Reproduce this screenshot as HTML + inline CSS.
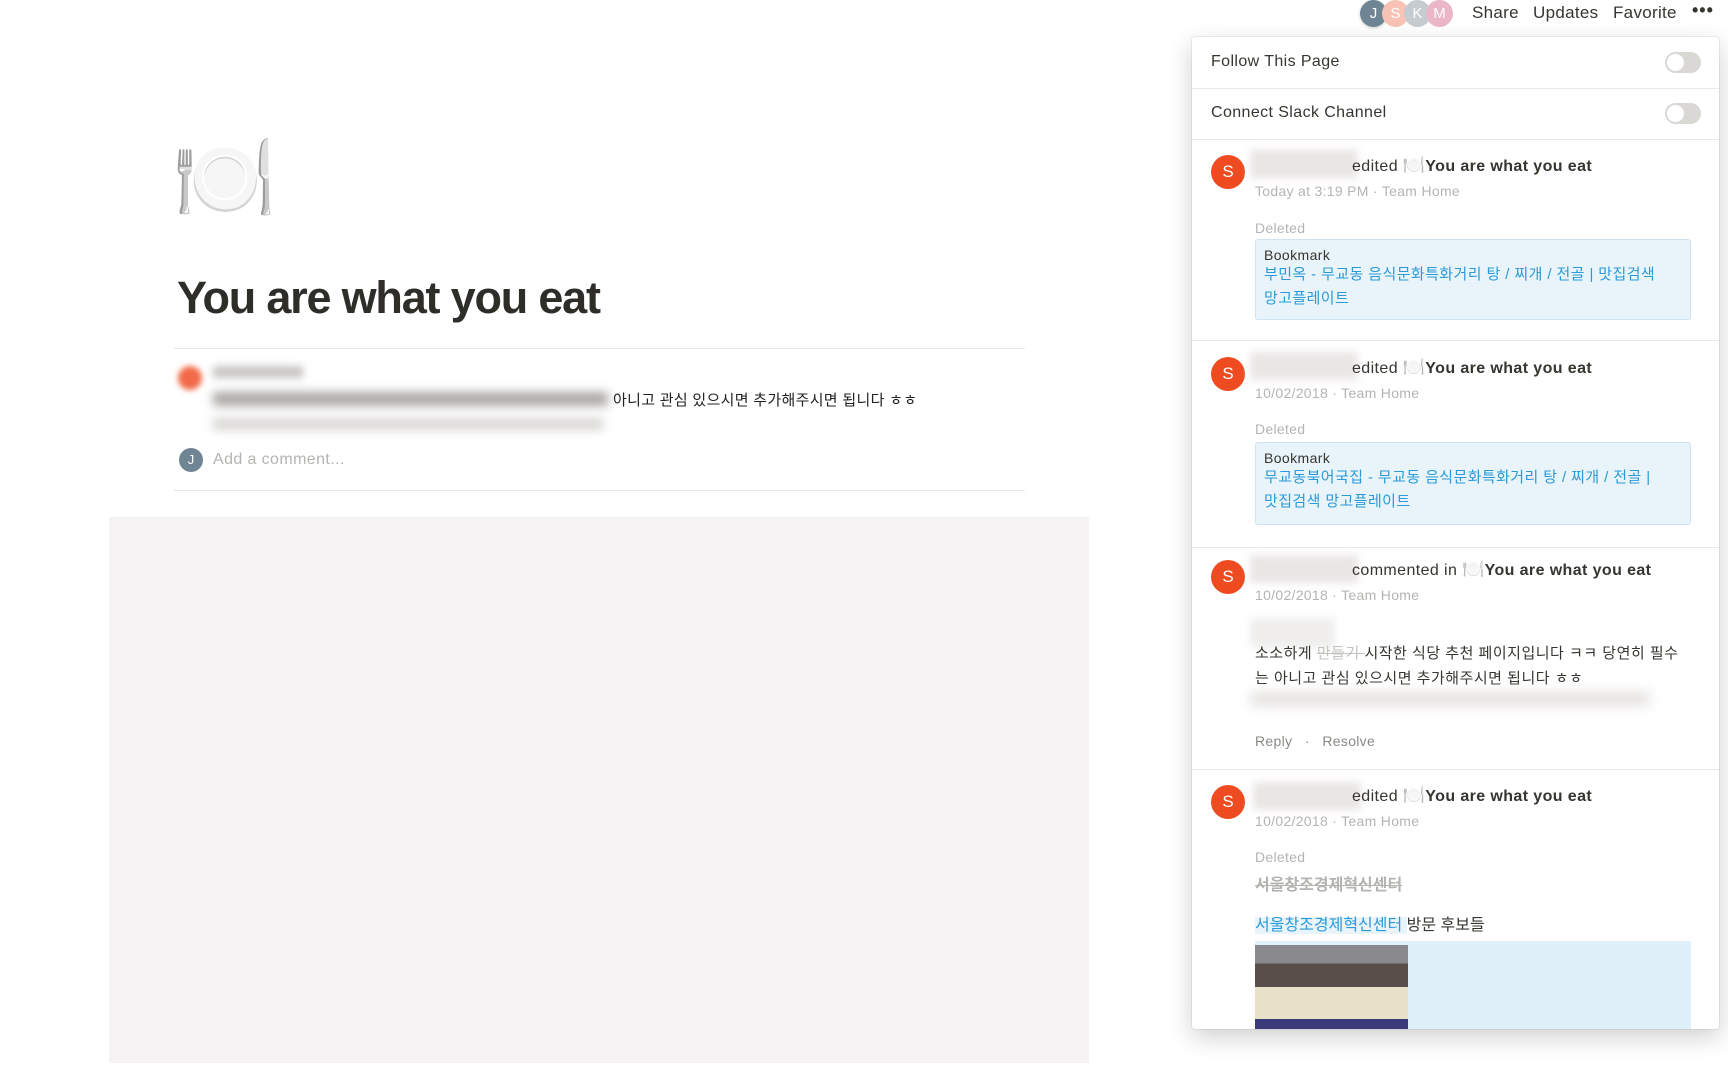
<!DOCTYPE html>
<html><head><meta charset="utf-8"><style>
*{margin:0;padding:0;box-sizing:border-box}
body{width:1728px;height:1072px;overflow:hidden;background:#fff;font-family:"Liberation Sans","Noto Sans CJK KR",sans-serif;color:#37352f;position:relative}
.a{position:absolute;white-space:nowrap}
.av{position:absolute;border-radius:50%;color:#fff;text-align:center;font-size:15px}
.blur{filter:blur(5px)}
.p{font-size:16px;color:#37352f;letter-spacing:0.4px}
.g{color:#b5b4b1;font-size:14px;letter-spacing:0.3px}
.S{width:34px;height:34px;line-height:34px;background:#ee4b21;font-size:17px}
.nb{position:absolute;width:108px;height:28px;background:#e9e6e5;filter:blur(4px)}
.bm{position:absolute;left:1255px;width:436px;background:#e8f3fa;border:1px solid #cfe4f1;border-radius:3px;padding:7px 8px;font-size:15px;line-height:24px;letter-spacing:0.4px}
.bm b{font-weight:normal;color:#37352f;display:block;line-height:16px;font-size:14px}
.bm span{color:#2a9bd8;white-space:nowrap}
.div{position:absolute;left:1192px;width:527px;height:1px;background:#ebeaea}
.tg{position:absolute;left:1665px;width:36px;height:21px;border-radius:11px;background:#d9d8d5}
.tg::after{content:"";position:absolute;left:2px;top:2px;width:17px;height:17px;border-radius:50%;background:#fff}
.em{font-size:18px;letter-spacing:0}
</style></head><body>
<div class="av" style="left:1360px;top:0;width:27px;height:27px;line-height:27px;background:#6f8594;box-shadow:0 1px 3px rgba(0,0,0,.2)">J</div>
<div class="av" style="left:1382px;top:0;width:27px;height:27px;line-height:27px;background:#f8c3b4">S</div>
<div class="av" style="left:1404px;top:0;width:27px;height:27px;line-height:27px;background:#c6cbcf">K</div>
<div class="av" style="left:1426px;top:0;width:27px;height:27px;line-height:27px;background:#eab6c8">M</div>
<div class="a" style="left:1472px;top:3px;font-size:17px;letter-spacing:0.3px">Share</div>
<div class="a" style="left:1533px;top:3px;font-size:17px;letter-spacing:0.3px">Updates</div>
<div class="a" style="left:1613px;top:3px;font-size:17px;letter-spacing:0.3px">Favorite</div>
<div class="a" style="left:1692px;top:0px;font-size:18px;font-weight:bold;letter-spacing:1px">•••</div>

<div class="a" style="left:172px;top:128px;font-size:84px;line-height:100px">🍽️</div>
<div class="a" style="left:177px;top:272px;font-size:45px;font-weight:bold;letter-spacing:-1.2px;color:#2f2d28">You are what you eat</div>
<div class="a" style="left:174px;top:348px;width:851px;height:1px;background:#e8e7e5"></div>
<div class="av blur" style="left:178px;top:366px;width:24px;height:24px;background:#f26a48;filter:blur(3px)"></div>
<div class="a blur" style="left:213px;top:366px;width:90px;height:12px;background:#c7c5c2;filter:blur(4px)"></div>
<div class="a blur" style="left:213px;top:392px;width:395px;height:14px;background:#a9a7a4;filter:blur(5px)"></div>
<div class="a blur" style="left:213px;top:418px;width:390px;height:12px;background:#d7d5d3;filter:blur(5px)"></div>
<div class="a" style="left:613px;top:389px;font-size:15px;color:#222;letter-spacing:0.3px">아니고 관심 있으시면 추가해주시면 됩니다 ㅎㅎ</div>
<div class="av" style="left:179px;top:448px;width:24px;height:24px;line-height:24px;background:#6f8594;font-size:13px">J</div>
<div class="a" style="left:213px;top:451px;font-size:16px;color:#b5b4b1;letter-spacing:0.4px">Add a comment...</div>
<div class="a" style="left:174px;top:490px;width:851px;height:1px;background:#e8e7e5"></div>
<div class="a" style="left:109px;top:517px;width:980px;height:546px;background:#f5f3f3"></div>

<div class="a" style="left:1192px;top:37px;width:527px;height:992px;background:#fff;border-radius:3px;box-shadow:0 0 0 1px rgba(15,15,15,.06),0 8px 24px rgba(15,15,15,.2);overflow:hidden"></div>
<div class="a p" style="left:1211px;top:53px">Follow This Page</div>
<div class="tg" style="top:52px"></div>
<div class="div" style="top:88px"></div>
<div class="a p" style="left:1211px;top:104px">Connect Slack Channel</div>
<div class="tg" style="top:103px"></div>
<div class="div" style="top:139px"></div>

<div class="av S" style="left:1211px;top:155px">S</div>
<div class="nb" style="left:1250px;top:150px"></div>
<div class="a p" style="left:1352px;top:155px">edited <span class="em">🍽️</span><b>You are what you eat</b></div>
<div class="a g" style="left:1255px;top:183px">Today at 3:19 PM · Team Home</div>
<div class="a g" style="left:1255px;top:220px">Deleted</div>
<div class="bm" style="top:239px;height:81px"><b>Bookmark</b><span>부민옥 - 무교동 음식문화특화거리 탕 / 찌개 / 전골 | 맛집검색<br>망고플레이트</span></div>
<div class="div" style="top:340px"></div>

<div class="av S" style="left:1211px;top:357px">S</div>
<div class="nb" style="left:1250px;top:352px"></div>
<div class="a p" style="left:1352px;top:357px">edited <span class="em">🍽️</span><b>You are what you eat</b></div>
<div class="a g" style="left:1255px;top:385px">10/02/2018 · Team Home</div>
<div class="a g" style="left:1255px;top:421px">Deleted</div>
<div class="bm" style="top:442px;height:83px"><b>Bookmark</b><span>무교동북어국집 - 무교동 음식문화특화거리 탕 / 찌개 / 전골 |<br>맛집검색 망고플레이트</span></div>
<div class="div" style="top:547px"></div>

<div class="av S" style="left:1211px;top:560px">S</div>
<div class="nb" style="left:1250px;top:555px"></div>
<div class="a p" style="left:1352px;top:559px">commented in <span class="em">🍽️</span><b>You are what you eat</b></div>
<div class="a g" style="left:1255px;top:587px">10/02/2018 · Team Home</div>
<div class="a" style="left:1250px;top:618px;width:85px;height:30px;background:#efeeed;filter:blur(4px)"></div>
<div class="a" style="left:1255px;top:641px;font-size:15px;line-height:25px;color:#37352f;letter-spacing:0.5px">소소하게 <s style="color:#c3c2bf">만들기 </s>시작한 식당 추천 페이지입니다 ㅋㅋ 당연히 필수<br>는 아니고 관심 있으시면 추가해주시면 됩니다 ㅎㅎ</div>
<div class="a" style="left:1250px;top:692px;width:400px;height:14px;background:#e4e2e0;filter:blur(6px)"></div>
<div class="a" style="left:1255px;top:733px;font-size:14px;color:#8a8985;letter-spacing:0.3px">Reply &nbsp; · &nbsp; Resolve</div>
<div class="div" style="top:769px"></div>

<div class="av S" style="left:1211px;top:785px">S</div>
<div class="nb" style="left:1253px;top:782px"></div>
<div class="a p" style="left:1352px;top:785px">edited <span class="em">🍽️</span><b>You are what you eat</b></div>
<div class="a g" style="left:1255px;top:813px">10/02/2018 · Team Home</div>
<div class="a g" style="left:1255px;top:849px">Deleted</div>
<div class="a" style="left:1255px;top:871px;font-size:16px;font-weight:bold;color:#b5b4b1;text-decoration:line-through">서울창조경제혁신센터</div>
<div class="a" style="left:1255px;top:911px;font-size:16px"><span style="color:#2a9bd8;background:#e8f3fa">서울창조경제혁신센터 </span>방문 후보들</div>
<div class="a" style="left:1255px;top:941px;width:436px;height:88px;background:#dff0f8"></div>
<div class="a" style="left:1255px;top:945px;width:153px;height:84px;background:linear-gradient(#8a8a8e 0 22%,#5a4e4a 22% 50%,#e8e0c8 50% 88%,#3a3a7a 88%)"></div>
</body></html>
